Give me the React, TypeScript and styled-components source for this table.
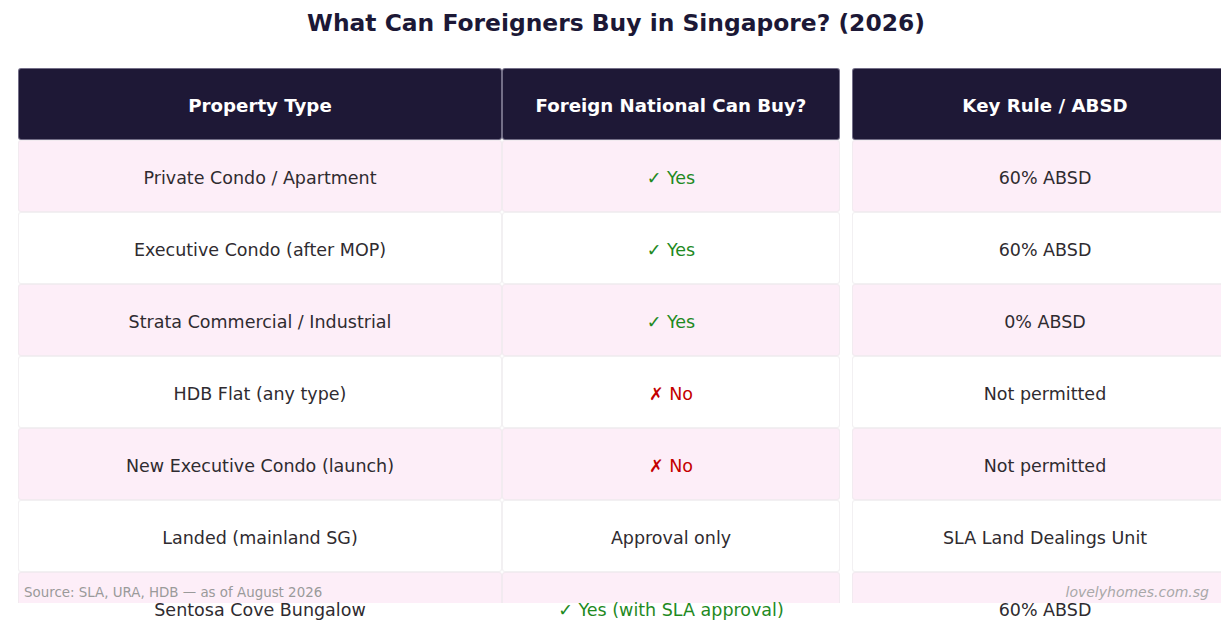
import React from "react";
import styled, { createGlobalStyle, css } from "styled-components";

const Global = createGlobalStyle`
  html, body { margin: 0; padding: 0; background: #ffffff; }
  body { font-family: "DejaVu Sans", "Liberation Sans", sans-serif; }
`;

const Page = styled.div`
  position: relative;
  width: 1232px;
  height: 630px;
  overflow: hidden;
  background: #ffffff;
  display: flex;
  flex-direction: column;
  & > * { flex-shrink: 0; }
`;

const Title = styled.h1`
  margin: 0;
  height: 46px;
  display: flex;
  align-items: center;
  justify-content: center;
  font-size: 23.4px;
  font-weight: bold;
  color: #1c1836;
`;

const TableClip = styled.div`
  margin: 22px 0 0 18px;
  width: 1203px;
  overflow-x: clip;
  overflow-y: visible;
`;

const Grid = styled.div`
  display: grid;
  grid-template-columns: 484px 338px 398px;
`;

type Tone = "dark" | "pink" | "white";
type Ink = "plain" | "yes" | "no";

const Cell = styled.div<{ $tone: Tone; $ink?: Ink; $gapLeft?: boolean; $clipped?: boolean }>`
  position: relative;
  box-sizing: border-box;
  height: 72px;
  display: flex;
  align-items: center;
  justify-content: center;
  margin-left: ${(p) => (p.$gapLeft ? "12px" : "0")};
  border-radius: 3px;
  font-size: ${(p) => (p.$tone === "dark" ? "18.2px" : "17.5px")};
  font-weight: ${(p) => (p.$tone === "dark" ? "bold" : "normal")};
  color: ${(p) =>
    p.$tone === "dark"
      ? "#ffffff"
      : p.$ink === "yes"
      ? "#1f8a1f"
      : p.$ink === "no"
      ? "#c40000"
      : "#2f2b30"};
  ${(p) =>
    p.$clipped
      ? css`
          &::before {
            content: "";
            position: absolute;
            left: 0;
            right: 0;
            top: 0;
            height: 31px;
            background: #fdeef8;
            border: 1px solid rgba(236, 232, 236, 0.6);
            border-bottom: none;
            border-radius: 3px 3px 0 0;
            box-sizing: border-box;
          }
        `
      : css`
          background: ${p.$tone === "dark" ? "#1e1836" : p.$tone === "pink" ? "#fdeef8" : "#ffffff"};
          border: 1px solid
            ${p.$tone === "dark" ? "rgba(200, 196, 215, 0.5)" : "rgba(236, 234, 236, 0.7)"};
        `}
`;

const CellText = styled.span`
  position: relative;
  padding-top: 3px;
`;

const Footnote = styled.div`
  position: absolute;
  left: 24px;
  top: 585px;
  font-size: 13.4px;
  color: #9a9a9a;
`;

const Watermark = styled.div`
  position: absolute;
  right: 23px;
  top: 584px;
  font-size: 14px;
  font-style: italic;
  color: #a8a8a8;
`;

const headers = ["Property Type", "Foreign National Can Buy?", "Key Rule / ABSD"];

const rows: { type: string; can: string; ink: Ink; rule: string }[] = [
  { type: "Private Condo / Apartment", can: "✓ Yes", ink: "yes", rule: "60% ABSD" },
  { type: "Executive Condo (after MOP)", can: "✓ Yes", ink: "yes", rule: "60% ABSD" },
  { type: "Strata Commercial / Industrial", can: "✓ Yes", ink: "yes", rule: "0% ABSD" },
  { type: "HDB Flat (any type)", can: "✗ No", ink: "no", rule: "Not permitted" },
  { type: "New Executive Condo (launch)", can: "✗ No", ink: "no", rule: "Not permitted" },
  { type: "Landed (mainland SG)", can: "Approval only", ink: "plain", rule: "SLA Land Dealings Unit" },
  { type: "Sentosa Cove Bungalow", can: "✓ Yes (with SLA approval)", ink: "yes", rule: "60% ABSD" },
];

export default function App() {
  return (
    <Page>
      <Global />
      <Title>What Can Foreigners Buy in Singapore? (2026)</Title>
      <TableClip>
        <Grid>
          {headers.map((h, i) => (
            <Cell key={h} $tone="dark" $gapLeft={i === 2}>
              <CellText>{h}</CellText>
            </Cell>
          ))}
          {rows.map((r, idx) => {
            const tone: Tone = idx % 2 === 0 ? "pink" : "white";
            const clipped = idx === rows.length - 1;
            return (
              <React.Fragment key={r.type}>
                <Cell $tone={tone} $clipped={clipped}>
                  <CellText>{r.type}</CellText>
                </Cell>
                <Cell $tone={tone} $ink={r.ink} $clipped={clipped}>
                  <CellText>{r.can}</CellText>
                </Cell>
                <Cell $tone={tone} $gapLeft $clipped={clipped}>
                  <CellText>{r.rule}</CellText>
                </Cell>
              </React.Fragment>
            );
          })}
        </Grid>
      </TableClip>
      <Footnote>Source: SLA, URA, HDB — as of August 2026</Footnote>
      <Watermark>lovelyhomes.com.sg</Watermark>
    </Page>
  );
}
